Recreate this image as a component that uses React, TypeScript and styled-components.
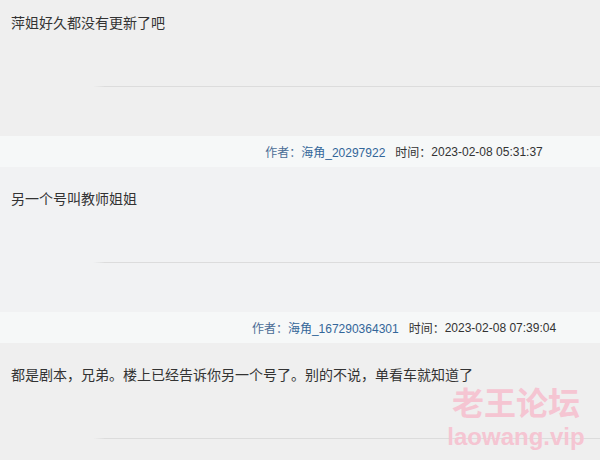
import React from 'react';
import styled, { createGlobalStyle } from 'styled-components';

const GlobalStyle = createGlobalStyle`
	html, body {
		margin: 0;
		padding: 0;
		background: #efefef;
	}
	body {
		font-family: "Liberation Sans", "Noto Sans CJK SC", sans-serif;
		color: #333;
	}
	#root {
		width: 600px;
		height: 460px;
		overflow: hidden;
		position: relative;
	}
`;

const Thread = styled.div`
	display: flex;
	flex-direction: column;
`;

const Content = styled.div<{ $first?: boolean; $tint?: string }>`
	display: flex;
	flex-direction: column;
	padding: ${(p) => (p.$first ? '12px' : '21px')} 0 49px 11px;
	background: ${(p) => p.$tint || '#efefef'};
`;

const Message = styled.div`
	font-size: 14px;
	line-height: 20px;
	color: #333;
	font-family: "Noto Sans CJK SC", "Liberation Sans", sans-serif;
`;

const Divider = styled.div`
	height: 1px;
	margin: 54px 0 0 82px;
	background: linear-gradient(to right, rgba(220, 220, 220, 0), #dcdcdc 12px);
`;

const MetaBar = styled.div`
	display: flex;
	justify-content: center;
	align-items: center;
	height: 31px;
	padding-left: 208px;
	background: #f6f8f8;
	font-size: 12px;
	white-space: nowrap;
`;

const Label = styled.span<{ $tone?: 'blue' | 'dark' }>`
	color: ${(p) => (p.$tone === 'blue' ? '#4b6d96' : '#333')};
`;

const Author = styled.a`
	color: #336699;
	text-decoration: none;
	margin-right: 10px;
`;

const Stamp = styled.span`
	color: #333;
`;

// site watermark lying over the last post
const Watermark = styled.div`
	position: absolute;
	left: 447px;
	top: 384px;
	width: 138px;
	display: flex;
	flex-direction: column;
	align-items: center;
	color: #f5c5d2;
	font-weight: bold;
	pointer-events: none;
`;

const MarkTitle = styled.div`
	font-family: "Noto Sans CJK SC", sans-serif;
	font-size: 32px;
	line-height: 34px;
`;

const MarkUrl = styled.div`
	font-family: "Liberation Sans", sans-serif;
	font-size: 24px;
	line-height: 28px;
	margin-top: 5px;
`;

interface Post {
	text: string;
	author?: string;
	time?: string;
	tint?: string;
}

const posts: Post[] = [
	{ text: '萍姐好久都没有更新了吧', author: '海角_20297922', time: '2023-02-08 05:31:37' },
	{ text: '另一个号叫教师姐姐', author: '海角_167290364301', time: '2023-02-08 07:39:04', tint: '#f1f2f3' },
	{ text: '都是剧本，兄弟。楼上已经告诉你另一个号了。别的不说，单看车就知道了' },
];

const App: React.FC = () => {
	return (
		<>
			<GlobalStyle />
			<Thread>
				{posts.map((p, i) => (
					<React.Fragment key={i}>
						<Content $first={i === 0} $tint={p.tint}>
							<Message>{p.text}</Message>
							<Divider />
						</Content>
						{p.author && (
							<MetaBar>
								<Label $tone="blue">作者：</Label>
								<Author href="#">{p.author}</Author>
								<Label>时间：</Label>
								<Stamp>{p.time}</Stamp>
							</MetaBar>
						)}
					</React.Fragment>
				))}
			</Thread>
			<Watermark>
				<MarkTitle>老王论坛</MarkTitle>
				<MarkUrl>laowang.vip</MarkUrl>
			</Watermark>
		</>
	);
};

export default App;
